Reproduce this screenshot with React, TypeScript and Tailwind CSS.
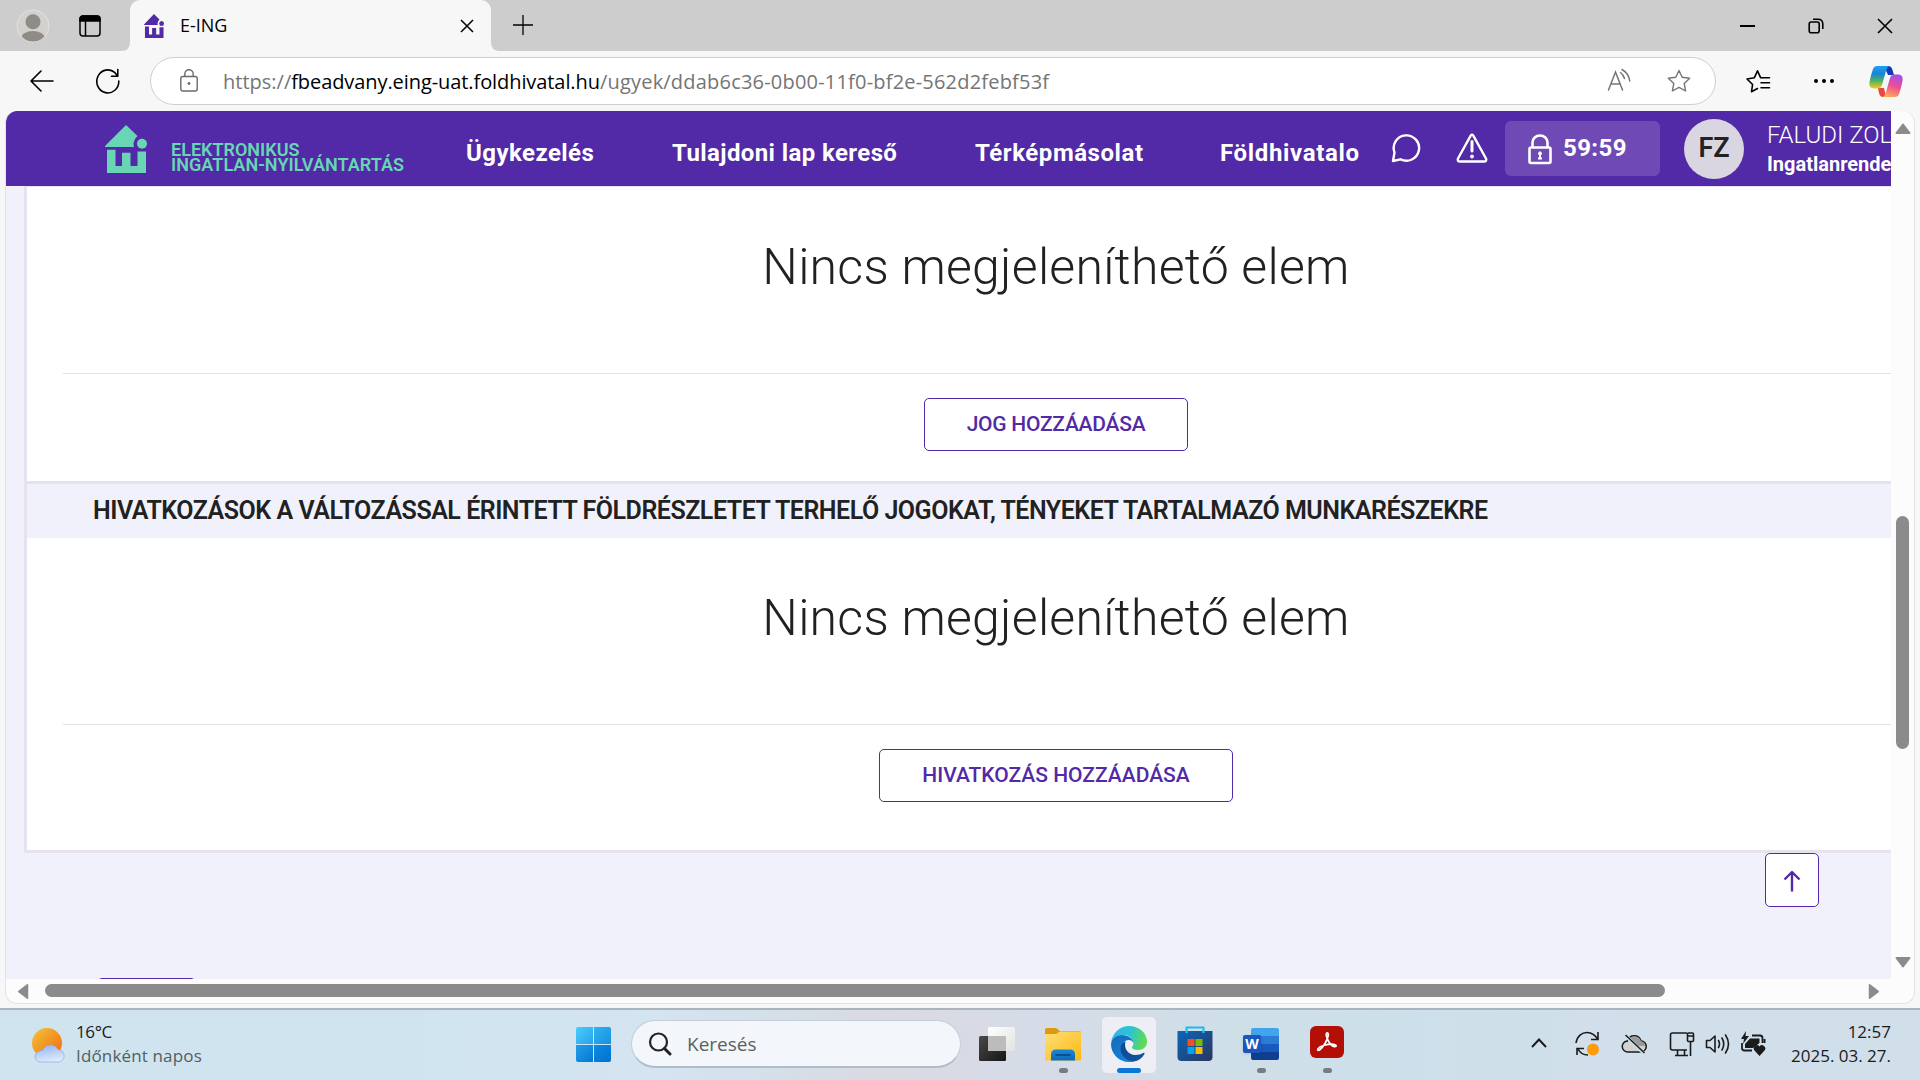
import React from "react";

const EXO = "font-[Roboto,sans-serif]";
const UI = "font-['Open_Sans',sans-serif]";

const HouseLogo = ({ className }: { className: string }) => (
  <svg viewBox="0 0 42 48" className={className} fill="currentColor" preserveAspectRatio="none">
    <path d="M21 0 L32.500 11 Q29 14 28.500 18 Q28.500 20 29 22 H0.500 Q-.5 21.500 .5 20.500 Z" />
    <circle cx="37" cy="18.800" r="5" />
    <path d="M2 24.800 H10.500 V41 H17 V27.800 H25.500 V41 H32.500 V26.500 H41 V48 H2 Z" />
  </svg>
);

function TabStrip() {
  return (
    <div className="flex h-[51px] shrink-0 items-center bg-[#cdcdcd]">
      <svg viewBox="0 0 34 36" className="ml-4 h-9 w-[34px]">
        <defs>
          <clipPath id="av"><circle cx="17" cy="18" r="15.500" /></clipPath>
        </defs>
        <circle cx="17" cy="18" r="16" fill="#d3d1cd" stroke="#e4e3e1" strokeWidth="1" />
        <g clipPath="url(#av)" fill="#8f8b87">
          <circle cx="17" cy="13.800" r="7.500" />
          <ellipse cx="17" cy="31" rx="12" ry="8" />
        </g>
      </svg>
      <svg viewBox="0 0 22 22" className="ml-[29px] h-[22px] w-[22px]" fill="none" stroke="#000" strokeWidth="1.500">
        <rect x="1" y="1" width="20" height="20" rx="3" />
        <path d="M1 5 V4 a3 3 0 0 1 3-3 h14 a3 3 0 0 1 3 3 v2 H1z" fill="#000" />
        <path d="M6.500 6 V21" />
      </svg>
      <div className="relative ml-[29px] flex h-full w-[361px] items-center rounded-t-[10px] bg-[#f7f7f7]">
        <svg viewBox="0 0 9 9" className="absolute bottom-0 -left-[9px] h-[9px] w-[9px]"><path d="M9 0 V9 H0 Q9 9 9 0z" fill="#f7f7f7" /></svg>
        <svg viewBox="0 0 9 9" className="absolute -right-[9px] bottom-0 h-[9px] w-[9px]"><path d="M0 0 V9 H9 Q0 9 0 0z" fill="#f7f7f7" /></svg>
        <HouseLogo className="ml-[14px] h-6 w-5 text-[#5229a6]" />
        <span className={`${UI} mb-[2px] ml-4 text-[18px] leading-6 text-black`}>E-ING</span>
        <svg viewBox="0 0 14 14" className="mr-[17px] ml-auto h-[14px] w-[14px]" stroke="#000" strokeWidth="1.500"><path d="M1 1 L13 13 M13 1 L1 13" /></svg>
      </div>
      <svg viewBox="0 0 22 22" className="mb-[2px] ml-[21px] h-[22px] w-[22px]" stroke="#000" strokeWidth="1.300"><path d="M11 1 V21 M1 11 H21" /></svg>
      <div className="ml-auto flex items-center pr-[27px]">
        <div className="h-[2px] w-[15px] bg-black" />
        <svg viewBox="0 0 16 16" className="ml-[53px] h-4 w-4" fill="none" stroke="#000" strokeWidth="1.600">
          <rect x="1.200" y="4" width="10" height="10.800" rx="2" />
          <path d="M5 1.200 H10 Q14.800 1.200 14.800 6 V11" />
        </svg>
        <svg viewBox="0 0 16 16" className="ml-[53px] h-4 w-4" stroke="#000" strokeWidth="1.600"><path d="M1 1 L15 15 M15 1 L1 15" /></svg>
      </div>
    </div>
  );
}

const STAR = "M12 1.500 L15.200 8.300 L22.700 9.300 L17.200 14.500 L18.600 22 L12 18.400 L5.400 22 L6.800 14.500 L1.300 9.300 L8.800 8.300 Z";

function AddressBar() {
  return (
    <div className="flex h-[60px] shrink-0 items-center bg-[#f7f7f7]">
      <svg viewBox="0 0 24 22" className="ml-[30px] h-[22px] w-6" fill="none" stroke="#000" strokeWidth="1.600" strokeLinecap="round" strokeLinejoin="round"><path d="M23 11 H1 M11 1 L1 11 L11 21" /></svg>
      <svg viewBox="0 0 24 26" className="ml-[42px] h-[26px] w-6" fill="none" stroke="#000" strokeWidth="1.600" strokeLinecap="round" strokeLinejoin="round">
        <path d="M22.800 13 A11 11.500 0 1 1 19 4.700 L21.500 8 M21.800 1.500 V8.200 H15.500" />
      </svg>
      <div className="ml-[30px] flex h-[48px] w-[1566px] items-center rounded-full border border-[#cfcfcf] bg-white">
        <svg viewBox="0 0 18 23" className="mb-[2px] ml-[29px] h-[23px] w-[18px]" fill="none" stroke="#6b6b6b" strokeWidth="1.400">
          <rect x=".8" y="7.500" width="16.400" height="14.500" rx="2" />
          <path d="M4.800 7.500 V5 a4.200 4.200 0 0 1 8.400 0 V7.500" />
          <circle cx="9" cy="14.500" r="1.400" fill="#6b6b6b" stroke="none" />
        </svg>
        <div className={`${UI} mt-[2px] ml-[25px] text-[20px] leading-7 whitespace-nowrap text-[#757575]`}>
          <span>https://</span>
          <span className="tracking-[-0.08px] text-black">fbeadvany.eing-uat.foldhivatal.hu</span>
          <span className="tracking-[0.2px]">/ugyek/ddab6c36-0b00-11f0-bf2e-562d2febf53f</span>
        </div>
        <svg viewBox="0 0 24 24" className="mr-[36px] mb-[3px] ml-auto h-6 w-6" fill="none" stroke="#757575" strokeWidth="1.500" strokeLinecap="round">
          <path d="M1.500 22 L8.500 4 L15.500 22 M4 16 H13" />
          <path d="M13.500 4.500 Q16.500 6.800 17.500 10.500 M15 1.500 Q21.500 5 22.800 13" />
        </svg>
        <svg viewBox="0 0 24 24" className="mr-[24px] h-6 w-6" fill="none" stroke="#757575" strokeWidth="1.400" strokeLinejoin="round"><path d={STAR} /></svg>
      </div>
      <svg viewBox="0 0 26 26" className="ml-[29px] h-[26px] w-[26px]" fill="none" stroke="#000" strokeWidth="1.600" strokeLinejoin="round" strokeLinecap="round">
        <path d="M12.500 20.500 L6.500 23.700 L7.600 16.500 L2 11 L9.300 9.800 L12.500 2.800 L15.700 9.800 H24.500 M16 14.700 H24.500 M16 19.800 H24.500" />
      </svg>
      <div className="ml-[43px] flex gap-1">
        <i className="h-1 w-1 rounded-full bg-black" /><i className="h-1 w-1 rounded-full bg-black" /><i className="h-1 w-1 rounded-full bg-black" />
      </div>
      <svg viewBox="0 0 34 31" className="ml-[35px] h-[31px] w-[34px]">
        <defs>
          <linearGradient id="cpa" x1="0" y1="0" x2="0" y2="1"><stop offset="0" stopColor="#1aa3f5" /><stop offset=".35" stopColor="#1b82d8" /><stop offset=".65" stopColor="#4cb263" /><stop offset="1" stopColor="#f7cb1f" /></linearGradient>
          <linearGradient id="cpb" x1=".6" y1="0" x2=".3" y2="1"><stop offset="0" stopColor="#a350e8" /><stop offset=".5" stopColor="#ee5091" /><stop offset="1" stopColor="#ffab55" /></linearGradient>
        </defs>
        <path d="M15 0 H19 Q22.500 0 23.500 4 L25 9 H19 Z" fill="#1438b8" />
        <path d="M9 22 H15 L17 31 H14 Q11 31 10 27 Z" fill="#e8473f" />
        <path d="M8 0 H20 Q18 1 17 5 L13 19 Q12 22.500 9 22.500 H5 Q-.5 22.500 .5 16 Q2 8 4 3 Q5.200 0 8 0z" fill="url(#cpa)" />
        <path d="M26 31 H14 Q16 30 17 26 L21 12 Q22 8.500 25 8.500 H29 Q34.500 8.500 33.500 15 Q32 23 30 28 Q28.800 31 26 31z" fill="url(#cpb)" />
      </svg>
    </div>
  );
}

function SiteHeader() {
  const nav = "leading-[30px] mt-[27px] text-[24px] font-bold whitespace-nowrap shrink-0";
  return (
    <header className={`${EXO} flex h-[75px] shrink-0 items-start overflow-hidden bg-[#5229a6] text-white`}>
      <HouseLogo className="mt-[14px] ml-[99px] h-12 w-[42px] shrink-0 text-[#68d6b4]" />
      <div className="mt-[31px] ml-[24px] w-[258px] shrink-0 text-[18px] leading-[15px] font-semibold whitespace-nowrap text-[#68d6b4]">
        <div>ELEKTRONIKUS</div>
        <div className="tracking-[0.05px]">INGATLAN-NYILVÁNTARTÁS</div>
      </div>
      <div className={`${nav} ml-[37px] w-[206px] tracking-[0.45px]`}>Ügykezelés</div>
      <div className={`${nav} w-[303px] tracking-[0.4px]`}>Tulajdoni lap kereső</div>
      <div className={`${nav} w-[245px] tracking-[0.55px]`}>Térképmásolat</div>
      <div className={`${nav} w-[171px] tracking-[0.65px]`}>Földhivatalo</div>
      <svg viewBox="0 0 30 30" className="mt-[22px] h-[30px] w-[30px] shrink-0" fill="none" stroke="#fff" strokeWidth="2.400" strokeLinejoin="round">
        <path d="M3.500 19.500 A12.700 12.700 0 1 1 9.500 26.300 L2 28 Z" />
      </svg>
      <svg viewBox="0 0 32 30" className="mt-[22px] ml-[35px] h-[30px] w-8 shrink-0" fill="none" stroke="#fff" strokeWidth="2.400" strokeLinejoin="round" strokeLinecap="round">
        <path d="M14.700 2.600 Q16 .8 17.300 2.600 L30 25.500 Q31 28.500 28 28.500 H4 Q1 28.500 2 25.500 Z" />
        <path d="M16 8.500 V18" strokeWidth="3" />
        <circle cx="16" cy="23.500" r="1" strokeWidth="1.800" />
      </svg>
      <div className="mt-[10px] ml-[17px] flex h-[55px] w-[155px] shrink-0 rounded-md bg-[#6f4ab5]">
        <svg viewBox="0 0 24 31" className="mt-[13px] ml-[23px] h-[31px] w-6" fill="none" stroke="#fff" strokeWidth="2.600">
          <rect x="1.500" y="13.500" width="21" height="15.500" rx="1.500" />
          <path d="M4.500 13 V8.500 a7.500 7 0 0 1 15 0 V13" />
          <path d="M12 17.500 V25.500 M10 19.500 H14 M10 24.500 H14" strokeWidth="2" />
        </svg>
        <div className="mt-[12px] ml-[11px] text-[24px] leading-[30px] font-bold tracking-[0.4px]">59:59</div>
      </div>
      <div className="mt-[8px] ml-[24px] flex h-[60px] w-[60px] shrink-0 items-center justify-center rounded-full bg-[#d9d6e2] pb-[3px] text-[27px] leading-8 font-semibold text-[#222]">FZ</div>
      <div className="mt-[9px] ml-[23px] shrink-0 whitespace-nowrap">
        <div className="text-[24px] leading-[30px] font-light">FALUDI ZOL</div>
        <div className="mt-[2px] text-[20px] leading-6 font-bold">Ingatlanrende</div>
      </div>
    </header>
  );
}

function EmptySection({ buttonText, buttonClass }: { buttonText: string; buttonClass: string }) {
  return (
    <section className="flex w-[2058px] flex-col items-center pt-[45px]">
      <div className="text-[50px] leading-[70px] font-light tracking-[0.25px] whitespace-nowrap text-[#212121]">Nincs megjeleníthető elem</div>
      <div className="mt-[71px] ml-[36px] h-px self-stretch bg-[#e2e2e2]" />
      <button className={`${buttonClass} mt-6 flex h-[53px] items-start justify-center rounded-[5px] border border-[#5229a6] bg-white pt-[10px] text-[21px] leading-[30px] font-medium whitespace-nowrap text-[#5229a6]`}>{buttonText}</button>
    </section>
  );
}

function PageBody() {
  return (
    <main className={`${EXO} flex-1 overflow-hidden bg-[#f1f1fb]`}>
      <div className="ml-[18px] h-[667px] w-[2062px] border-b-[3px] border-l-[3px] border-[#e6e3ef] bg-white">
        <div className="h-px bg-[#e6e3ef]" />
        <div className="h-[294px]">
          <EmptySection buttonText="JOG HOZZÁADÁSA" buttonClass="w-[264px] tracking-[-0.25px]" />
        </div>
        <div className="h-[57px] border-t-[3px] border-[#e6e3ef] bg-[#f1f1fb] pt-[12px] pl-[66px] text-[25px] leading-[30px] font-semibold tracking-[-0.48px] whitespace-nowrap text-[#212121]">
          HIVATKOZÁSOK A VÁLTOZÁSSAL ÉRINTETT FÖLDRÉSZLETET TERHELŐ JOGOKAT, TÉNYEKET TARTALMAZÓ MUNKARÉSZEKRE
        </div>
        <EmptySection buttonText="HIVATKOZÁS HOZZÁADÁSA" buttonClass="w-[354px]" />
      </div>
      <div className="flex justify-between">
        <div className="mt-[125px] ml-[91px] h-4 w-[99px] rounded-[5px] border border-[#5229a6] bg-white" />
        <button className="mr-[72px] flex h-[54px] w-[54px] items-center justify-center rounded-[5px] border border-[#5229a6] bg-white">
          <svg viewBox="0 0 18 22" className="mt-[2px] h-[22px] w-[18px]" fill="none" stroke="#5229a6" strokeWidth="2.400"><path d="M9 21.500 V2.500 M1.500 9.500 L9 2 L16.500 9.500" strokeLinejoin="round" /></svg>
        </button>
      </div>
    </main>
  );
}

const Triangle = ({ className }: { className: string }) => (
  <svg viewBox="0 0 16 11" className={className} fill="#8b8b8b" stroke="#8b8b8b" strokeWidth="2" strokeLinejoin="round"><path d="M8 1.500 L14.500 10 H1.500 Z" /></svg>
);

function Weather() {
  return (
    <div className="flex w-[576px] shrink-0">
      <svg viewBox="0 0 34 36" className="mt-[17px] ml-[31px] h-9 w-[34px]">
        <defs>
          <linearGradient id="sun" x1="0" y1="0" x2="1" y2="1"><stop offset="0" stopColor="#f3c43a" /><stop offset="1" stopColor="#f2670d" /></linearGradient>
          <linearGradient id="cl" x1="0" y1="0" x2=".3" y2="1"><stop offset="0" stopColor="#8fb2f0" /><stop offset="1" stopColor="#dce8fb" /></linearGradient>
        </defs>
        <circle cx="16" cy="16" r="15" fill="url(#sun)" />
        <path d="M10 35 a5.500 5.500 0 0 1-1-11 q1-1 2.500-.5 a8.500 8.500 0 0 1 15.500-1 a6.300 6.300 0 0 1 1 12.500z" fill="url(#cl)" stroke="#7fa3ea" strokeWidth=".6" />
      </svg>
      <div className="mt-[10px] ml-[11px] text-[17px] leading-6 whitespace-nowrap">
        <div className="tracking-[-0.4px] text-[#1b1b1b]">16°C</div>
        <div className="tracking-[0.15px] text-[#555d63]">Időnként napos</div>
      </div>
    </div>
  );
}

const Slot = ({ children, dot }: { children: React.ReactNode; dot?: boolean }) => (
  <div className="flex h-[58px] w-[66px] flex-col items-center">
    <div className="mt-[10px] flex h-9 items-center">{children}</div>
    {dot && <div className="mt-[6px] h-[5px] w-[9px] rounded-full bg-[#767c82]" />}
  </div>
);

function TaskIcons() {
  return (
    <div className="mt-[6px] ml-[3px] flex">
      <Slot>
        <svg viewBox="0 0 36 35" className="h-[35px] w-9">
          <defs>
            <linearGradient id="tvd" x1="0" y1="0" x2="1" y2="1"><stop offset="0" stopColor="#4a4a4a" /><stop offset="1" stopColor="#151515" /></linearGradient>
            <linearGradient id="tvw" x1="0" y1="0" x2="1" y2="1"><stop offset="0" stopColor="#fff" /><stop offset="1" stopColor="#e2e2e2" /></linearGradient>
          </defs>
          <rect x="9" y="0" width="27" height="24" rx="1.500" fill="url(#tvw)" />
          <rect x="0" y="9" width="27" height="25" rx="1.500" fill="url(#tvd)" />
          <path d="M9 9 H27 V24 H9z" fill="#bcbcbc" />
        </svg>
      </Slot>
      <Slot dot>
        <svg viewBox="0 0 36 33" className="h-[33px] w-9">
          <defs><linearGradient id="fo" x1="0" y1="0" x2="1" y2="1"><stop offset="0" stopColor="#ffdf7a" /><stop offset="1" stopColor="#fbb911" /></linearGradient><linearGradient id="fb" x1="0" y1="0" x2="0" y2="1"><stop offset="0" stopColor="#1a88d8" /><stop offset="1" stopColor="#0b6ab8" /></linearGradient></defs>
          <path d="M0 2 a2 2 0 0 1 2-2 H11 L15 3 H34 a2 2 0 0 1 2 2 V12 H0z" fill="#dc9b0c" />
          <path d="M0 6 H11 L15 3.500 H35 a1 1 0 0 1 1 1 V31 a1.500 1.500 0 0 1-1.500 1.500 H1.500 A1.500 1.500 0 0 1 0 31z" fill="url(#fo)" />
          <path d="M6 32.500 V26 a4.500 4.500 0 0 1 4.500-4.500 H25.500 a4.500 4.500 0 0 1 4.500 4.500 V32.500z" fill="url(#fb)" />
          <path d="M11 27 H25" stroke="#0d4f8c" strokeWidth="1.800" strokeLinecap="round" />
        </svg>
      </Slot>
      <div className="flex h-[58px] w-[66px] justify-center">
        <div className="flex h-[58px] w-[56px] flex-col items-center rounded-md border border-[#d9dbe2] bg-[#edeff4]">
          <svg viewBox="0 0 36 36" className="mt-[9px] h-9 w-9">
            <defs>
              <linearGradient id="e1" x1="0" y1=".3" x2="1" y2=".5"><stop offset="0" stopColor="#35b3ee" /><stop offset=".5" stopColor="#2cc3d3" /><stop offset="1" stopColor="#62dd4d" /></linearGradient>
              <linearGradient id="e2" x1="0" y1="0" x2=".6" y2="1"><stop offset="0" stopColor="#1669b5" /><stop offset="1" stopColor="#1283de" /></linearGradient>
              <linearGradient id="e3" x1="0" y1="0" x2="1" y2="1"><stop offset="0" stopColor="#0c4a91" /><stop offset="1" stopColor="#12559c" /></linearGradient>
            </defs>
            <path d="M0 17 C1 7 9 0 18 0 C28 0 36 7 36 15.500 C36 21 32 24 27.500 24 C23 24 21 22.500 21 21.500 C21 20.500 22.500 20 22.500 17.500 C22.500 12 17 8.500 11 9 C6 9.500 2 12.500 0 17z" fill="url(#e1)" />
            <path d="M0 18 C1 12 6 9 11 9 C17 9 22.500 12.500 22.500 17.500 C22 15 19.500 13.500 17 14 C12 15 10 20 11.500 25 C13 31 18 35 23.500 35.200 C21.500 36 19.500 36 18 36 C8 36 0 28 0 18z" fill="url(#e2)" />
            <path d="M14.500 15.500 C12.500 22 17 29 24.500 29 C28.500 29 31 27.500 32.500 26.700 Q34 26.500 33.500 28 C31 32.500 27 35 23 35.400 C15 35 9.500 29 9.500 23 C9.500 19 11.500 16.500 14.500 15.500z" fill="url(#e3)" />
          </svg>
          <div className="mt-[6px] h-[5px] w-6 rounded-full bg-[#0a78d4]" />
        </div>
      </div>
      <Slot>
        <svg viewBox="0 0 36 36" className="h-9 w-9">
          <defs><linearGradient id="st" x1="0" y1="0" x2="1" y2="1"><stop offset="0" stopColor="#0c66b8" /><stop offset="1" stopColor="#29375f" /></linearGradient></defs>
          <path d="M9.500 8 V1.500 H26.500 V8" fill="none" stroke="#23b7f1" strokeWidth="2" />
          <path d="M.5 5 H35.500 V31 a4 4 0 0 1-4 4 H4.500 a4 4 0 0 1-4-4z" fill="url(#st)" />
          <path d="M9.500 7 V4 M26.500 7 V4" stroke="#19d0ff" strokeWidth="2" />
          <path d="M10.500 13 h7 v7 h-7z" fill="#f25022" /><path d="M18.500 13 h7 v7 h-7z" fill="#7fba00" />
          <path d="M10.500 21 h7 v7 h-7z" fill="#00a4ef" /><path d="M18.500 21 h7 v7 h-7z" fill="#ffb900" />
        </svg>
      </Slot>
      <Slot dot>
        <div className="relative h-8 w-9">
          <div className="absolute top-0 right-0 flex h-8 w-7 flex-col overflow-hidden rounded-[2px]">
            <div className="h-2 bg-[#41a5ee]" /><div className="h-2 bg-[#2b7cd3]" /><div className="h-2 bg-[#185abd]" /><div className="h-2 bg-[#103f91]" />
          </div>
          <div className="absolute top-[7px] left-0 flex h-[18px] w-[18px] items-center justify-center rounded-[2px] bg-[#1a56be] text-[14px] leading-none font-bold text-white shadow">W</div>
        </div>
      </Slot>
      <Slot dot>
        <svg viewBox="0 0 34 32" className="mb-1 h-8 w-[34px]">
          <rect width="34" height="32" rx="6" fill="#b40f06" />
          <path d="M9.500 24 C6 25.500 7.500 21 13.500 19.500 C17 18.500 22 17.500 25 18.700 C28 20.500 24.500 21.500 22 19.500 C18.500 16.500 17 12.500 16.300 9.500 C15.800 6 18.800 6 18.200 9.500 C17.300 14.500 13.500 21 9.500 24 Z" fill="none" stroke="#fff" strokeWidth="1.700" strokeLinejoin="round" />
        </svg>
      </Slot>
    </div>
  );
}

function Tray() {
  const s = { fill: "none", stroke: "#1b1b1b", strokeWidth: 1.6 };
  return (
    <div className="mr-[29px] ml-auto flex">
      <svg viewBox="0 0 16 10" className="mt-[28px] h-[10px] w-4" {...s} strokeWidth={2}><path d="M1 9 L8 1.500 L15 9" /></svg>
      <svg viewBox="0 0 24 26" className="mt-[21px] ml-[28px] h-[26px] w-6" {...s}>
        <path d="M1 12 C2 5 7 1.500 12 1.500 C17 1.500 21 5 22.500 8 M23 1 V8.500 H16 M2 24 V17.500 H9 M3 18 Q6 24 13 24" />
        <circle cx="18" cy="18.500" r="6" fill="#ff9a0a" stroke="none" />
      </svg>
      <svg viewBox="0 0 26 20" className="mt-[24px] ml-[22px] h-5 w-[26px]" {...s} strokeWidth={1.5}>
        <path d="M7 18 a5.500 5.500 0 0 1-.5-11 a7 7 0 0 1 13.500 0 a5.500 5.500 0 0 1-.5 11z" fill="#d2d2d2" />
        <path d="M7 7 a7 7 0 0 1 13 0 q4 1 4 5 H15 Q13 7 7 7z" fill="#9a9a9a" stroke="none" />
        <path d="M4.500 1.500 L23 19.500" stroke="#cfe0ea" strokeWidth="3.500" /><path d="M4.500 1 L23.500 19" />
      </svg>
      <svg viewBox="0 0 26 26" className="mt-[21px] ml-[22px] h-[26px] w-[26px]" {...s}>
        <path d="M18 2 H3.500 Q1.500 2 1.500 4 V17 Q1.500 19 3.500 19 H18 M8.500 19 V24 M15.500 19 V24 M6 24.500 H19" />
        <rect x="18.500" y="2" width="6" height="8.500" rx="1" /><path d="M18.500 5 H24.500 M21.500 10.500 V25" />
      </svg>
      <svg viewBox="0 0 26 22" className="mt-[23px] ml-[10px] h-[22px] w-[26px]" {...s} strokeLinejoin="round" strokeLinecap="round">
        <path d="M1.500 7.500 H5 L10 3 V19 L5 14.500 H1.500z M13.500 7.500 Q15.500 11 13.500 14.500 M17 5 Q20.500 11 17 17 M20.500 2 Q26.500 11 20.500 20" />
      </svg>
      <svg viewBox="0 0 26 26" className="mt-[21px] ml-[9px] h-[26px] w-[26px]" {...s}>
        <path d="M12 4.500 H20 Q22.500 4.500 22.500 7 V12 M2 12 V17 Q2 19.500 4.500 19.500 H12" strokeWidth="1.800" />
        <path d="M24.500 8 V12" strokeWidth="2" />
        <path d="M10 7.500 H19.500 V12 L13 17 H5 V13z" fill="#1b1b1b" stroke="none" />
        <path d="M6 0 L1 8 H4 L3 13 L9 5 H5.500z" fill="#1b1b1b" stroke="none" />
        <path d="M19.500 25 L14.500 19.500 a2.900 2.900 0 0 1 5-4 a2.900 2.900 0 0 1 5 4z" fill="#1b1b1b" stroke="none" />
      </svg>
      <div className="mt-[10px] w-[125px] text-right text-[17px] leading-6 whitespace-nowrap text-[#1b1b1b]">
        <div>12:57</div>
        <div>2025. 03. 27.</div>
      </div>
    </div>
  );
}

function Taskbar() {
  return (
    <div className={`${UI} flex h-[72px] shrink-0 items-start border-t-2 border-[#a9b4bd] bg-[linear-gradient(90deg,#cfe4ee_0%,#d0e4ef_22%,#d4e4f1_34%,#d5dfe8_41%,#dadae2_46%,#d6dbe7_53%,#cfdfe8_64%,#cde0ea_72%,#d1dfeb_85%,#d0dfea_100%)]`}>
      <Weather />
      <div className="mt-[17px] grid h-[35px] w-[35px] shrink-0 grid-cols-2 gap-px">
        <div className="rounded-tl-[2px] bg-linear-to-br from-[#4cccfb] to-[#25a3ec]" />
        <div className="rounded-tr-[2px] bg-linear-to-br from-[#30b2f1] to-[#1690e0]" />
        <div className="rounded-bl-[2px] bg-linear-to-br from-[#1f9fe6] to-[#0778d3]" />
        <div className="rounded-br-[2px] bg-linear-to-br from-[#0d8ae0] to-[#0272d0]" />
      </div>
      <div className="mt-[10px] ml-[20px] flex h-[48px] w-[330px] shrink-0 rounded-full border border-b-2 border-[#c3ced8] border-b-[#afbcc9] bg-[#f3f6fa]">
        <svg viewBox="0 0 24 24" className="mt-[11px] ml-[16px] h-6 w-6" fill="none" stroke="#222" strokeWidth="2.200"><circle cx="10.500" cy="10" r="8.500" /><path d="M16.500 16.500 L22 22" strokeWidth="3" strokeLinecap="round" /></svg>
        <span className="mt-[9px] ml-[15px] text-[19px] leading-7 text-[#5c5f63]">Keresés</span>
      </div>
      <TaskIcons />
      <Tray />
    </div>
  );
}

export default function App() {
  return (
    <div className="flex h-[1080px] w-[1920px] flex-col overflow-hidden bg-[#f7f7f7]">
      <TabStrip />
      <AddressBar />
      <div className="mx-[5px] mb-[4px] flex min-h-0 flex-1 overflow-hidden rounded-[12px] border-x border-b border-[#e3e3e6] bg-[#fcfcfc]">
        <div className="flex w-[1885px] shrink-0 flex-col">
          <SiteHeader />
          <PageBody />
          <div className="flex h-[24px] shrink-0 items-start pt-[5px]">
            <Triangle className="mt-[2px] ml-[9px] h-[11px] w-4 -rotate-90" />
            <div className="ml-[14px] h-[13px] w-[1620px] rounded-full bg-[#8b8b8b]" />
            <Triangle className="mt-[2px] ml-[201px] h-[11px] w-4 rotate-90" />
          </div>
        </div>
        <div className="flex flex-1 flex-col items-center">
          <Triangle className="mt-[12px] h-[11px] w-4" />
          <div className="mt-[382px] h-[233px] w-[13px] rounded-full bg-[#8b8b8b]" />
          <Triangle className="mt-[208px] h-[11px] w-4 rotate-180" />
        </div>
      </div>
      <Taskbar />
    </div>
  );
}
